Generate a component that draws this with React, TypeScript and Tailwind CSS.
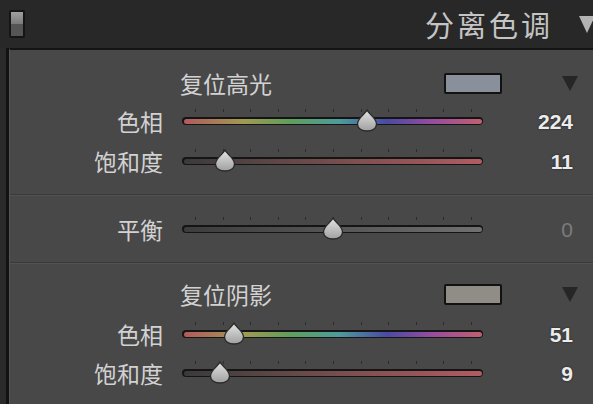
import React from 'react'

const cjk = { fontFamily: '"Noto Sans CJK SC", "Noto Sans", sans-serif' }
const num = { fontFamily: '"Liberation Sans", Arial, sans-serif' }

type Kind = 'hue' | 'sat' | 'bal'

const trackBg: Record<Kind, string> = {
  hue: 'bg-[linear-gradient(to_right,#b25a5e_0%,#a09a52_20%,#5e9e5c_36%,#4e9c9c_52%,#4a4aa4_68%,#9a4c9e_84%,#c0606e_100%)]',
  sat: 'bg-[linear-gradient(to_right,#3a3a3a_0%,#6a4a4a_40%,#b05c62_100%)]',
  bal: 'bg-[linear-gradient(to_right,#3c3c3c_0%,#5a5a5a_60%,#707070_100%)]',
}

function Thumb({ left }: { left: number }) {
  return (
    <svg
      width="22"
      height="23"
      viewBox="0 0 22 23"
      className="absolute top-1/2 -translate-x-1/2 -translate-y-[12px]"
      style={{ left }}
    >
      <defs>
        <linearGradient id="tg" x1="0" y1="0" x2="0" y2="1">
          <stop offset="0" stopColor="#e4e4e4" />
          <stop offset="1" stopColor="#a0a0a0" />
        </linearGradient>
      </defs>
      <path
        d="M11 1 C12.5 5 20.5 9 20.5 15 C20.5 19.5 16 22 11 22 C6 22 1.5 19.5 1.5 15 C1.5 9 9.5 5 11 1 Z"
        fill="url(#tg)"
        stroke="#2a2a2a"
        strokeWidth="1.3"
      />
    </svg>
  )
}

function Slider({ kind, frac }: { kind: Kind; frac: number }) {
  const ticks = Array.from({ length: 11 }, (_, i) => 13 + i * 27.6)
  return (
    <div className="relative w-[301px] h-full">
      {ticks.map((t, i) => (
        <div
          key={i}
          className="absolute top-1/2 -translate-y-[12px] w-px h-[3px] bg-[#2c2c2c]"
          style={{ left: t }}
        />
      ))}
      <div className="absolute left-0 right-0 top-1/2 -translate-y-1/2 h-[8px] rounded-full bg-[#151515] p-[1.5px]">
        <div className={`w-full h-full rounded-full ${trackBg[kind]}`} />
      </div>
      <Thumb left={13 + frac * 276} />
    </div>
  )
}

function Row({ label, kind, frac, value, h, dim }: { label: string; kind: Kind; frac: number; value: string; h: string; dim?: boolean }) {
  return (
    <div className={`flex items-center ${h}`}>
      <div className="w-[153px] text-right text-[23px] leading-none text-[#d2d2d2]" style={cjk}>
        {label}
      </div>
      <div className="ml-[19px] h-full">
        <Slider kind={kind} frac={frac} />
      </div>
      <div
        className={`w-[90px] text-right text-[21px] leading-none ${dim ? 'text-[#7c7c7c]' : 'font-bold text-[#ececec] [text-shadow:0_0_2px_#1a1a1a]'}`}
        style={num}
      >
        {value}
      </div>
    </div>
  )
}

function GroupHeader({ title, swatch }: { title: string; swatch: string }) {
  return (
    <div className="flex items-center h-[38px]">
      <div className="ml-[170px] w-[264px] text-[23px] leading-none text-[#d2d2d2]" style={cjk}>
        {title}
      </div>
      <div className={`w-[58px] h-[21px] border-2 border-[#121212] rounded-[2px] ${swatch}`} />
      <div className="ml-[60px] w-0 h-0 border-l-[8px] border-r-[8px] border-t-[15px] border-l-transparent border-r-transparent border-t-[#262626]" />
    </div>
  )
}

export default function App() {
  return (
    <div className="w-[593px] h-[404px] overflow-hidden bg-[#282828] flex flex-col select-none">
      {/* header */}
      <div className="h-[48px] flex items-center shrink-0">
        <div className="ml-[9px] w-[16px] h-[28px] border-2 border-[#151515] rounded-[2px] flex flex-col overflow-hidden">
          <div className="flex-1 bg-[linear-gradient(#a0a0a0,#7a7a7a)]" />
          <div className="flex-1 bg-[#555555]" />
        </div>
        <div className="ml-auto text-[29px] leading-none text-[#c4c4c4] tracking-[3px]" style={cjk}>
          分离色调
        </div>
        <div className="ml-[26px] mr-[-2px] w-0 h-0 border-l-[8px] border-r-[8px] border-t-[17px] border-l-transparent border-r-transparent border-t-[#b4b4b4]" />
      </div>

      {/* body */}
      <div className="flex flex-1 min-h-0">
        <div className="w-[6px] bg-[#2a2a2a]" />
        <div className="w-[3px] bg-[#121212]" />
        <div className="flex-1 bg-[#484848] border-t-2 border-[#141414] border-l border-l-[#565656] flex flex-col">
          {/* highlights */}
          <div className="pt-[14px] pb-[12px]">
            <GroupHeader title="复位高光" swatch="bg-[#8a8f9c]" />
            <Row label="色相" kind="hue" frac={224 / 360} value="224" h="h-[38px]" />
            <Row label="饱和度" kind="sat" frac={0.11} value="11" h="h-[42px]" />
          </div>
          <div className="h-px bg-[#3a3a3a]" />
          <div className="h-px bg-[#525252]" />
          {/* balance */}
          <Row label="平衡" kind="bal" frac={0.5} value="0" h="h-[66px]" dim />
          <div className="h-px bg-[#3a3a3a]" />
          <div className="h-px bg-[#525252]" />
          {/* shadows */}
          <div className="pt-[11px]">
            <GroupHeader title="复位阴影" swatch="bg-[#8f8d86]" />
            <Row label="色相" kind="hue" frac={51 / 360} value="51" h="h-[42px]" />
            <Row label="饱和度" kind="sat" frac={0.09} value="9" h="h-[36px]" />
          </div>
        </div>
      </div>
    </div>
  )
}
